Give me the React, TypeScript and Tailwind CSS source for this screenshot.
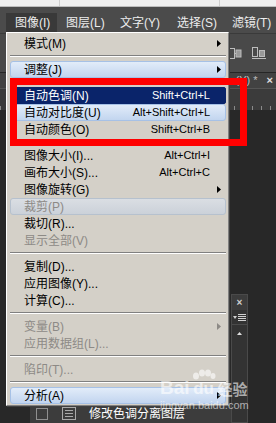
import React from "react";

type Row =
  | { sep: true }
  | {
      sep?: false;
      label: string;
      keys?: string;
      sub?: boolean;
      off?: boolean;
      hl?: "blue" | "navy" | "gray";
    };

const rows: Row[] = [
  { label: "模式(M)", sub: true },
  { sep: true },
  { label: "调整(J)", sub: true, hl: "blue" },
  { sep: true },
  { label: "自动色调(N)", keys: "Shift+Ctrl+L", hl: "navy" },
  { label: "自动对比度(U)", keys: "Alt+Shift+Ctrl+L", hl: "blue" },
  { label: "自动颜色(O)", keys: "Shift+Ctrl+B" },
  { sep: true },
  { label: "图像大小(I)...", keys: "Alt+Ctrl+I" },
  { label: "画布大小(S)...", keys: "Alt+Ctrl+C" },
  { label: "图像旋转(G)", sub: true },
  { label: "裁剪(P)", off: true, hl: "gray" },
  { label: "裁切(R)..." },
  { label: "显示全部(V)", off: true },
  { sep: true },
  { label: "复制(D)..." },
  { label: "应用图像(Y)..." },
  { label: "计算(C)..." },
  { sep: true },
  { label: "变量(B)", sub: true, off: true },
  { label: "应用数据组(L)...", off: true },
  { sep: true },
  { label: "陷印(T)...", off: true },
  { sep: true },
  { label: "分析(A)", sub: true, hl: "blue" },
];

const menubar = [
  { label: "图像(I)", w: "w-[51px] ml-[6px] bg-[#393939]" },
  { label: "图层(L)", w: "w-[54px]" },
  { label: "文字(Y)", w: "w-[57px]" },
  { label: "选择(S)", w: "w-[55px]" },
  { label: "滤镜(T)", w: "w-[60px]" },
];

function Arrow({ off }: { off?: boolean }) {
  return (
    <svg width="4" height="7" viewBox="0 0 4 7">
      <path d="M0 0 L4 3.5 L0 7 Z" fill={off ? "#8d8a86" : "#000"} />
    </svg>
  );
}

function MenuRow({ row }: { row: Exclude<Row, { sep: true }> }) {
  const hl =
    row.hl === "navy"
      ? "bg-[#0a246a] border-[#0a246a] rounded-[2px] text-white"
      : row.hl === "blue"
        ? "bg-gradient-to-b from-[#e2ecf9] to-[#c2d5ef] border-[#a6c1e6] rounded-[3px]"
        : row.hl === "gray"
          ? "bg-gradient-to-b from-[#dadee3] to-[#cbd1d9] border-[#b6c1ce] rounded-[3px]"
          : "border-transparent";
  const color = row.hl === "navy" ? "text-white" : row.off ? "text-[#8d8a86]" : "text-black";
  return (
    <div className={`ml-[3px] mr-[2px] h-[17px] border flex items-center pl-[13px] pr-[4px] ${hl} ${color}`}>
      <span className="flex-1 text-[12px] leading-none whitespace-nowrap">{row.label}</span>
      {row.keys && <span className="text-[11px] leading-none whitespace-nowrap">{row.keys}</span>}
      <span className="w-[11px] flex justify-end">{row.sub && <Arrow off={row.off} />}</span>
    </div>
  );
}

export default function App() {
  const ticks = Array.from({ length: 31 });
  return (
    <div
      className="relative w-[276px] h-[423px] overflow-hidden bg-[#282828] flex flex-col"
      style={{ fontFamily: '"Liberation Sans", "Noto Sans CJK SC", sans-serif' }}
    >
      {/* window above */}
      <div className="h-[7px] bg-[#efefef] flex border-b border-[#bdbdbd]">
        <div className="w-[60px] border-r border-[#cfcfcf]" />
        <div className="w-[160px] border-r border-[#cfcfcf]" />
      </div>

      {/* menubar */}
      <div className="h-[26px] bg-[#4b4b4b] flex items-end">
        {menubar.map((m) => (
          <div key={m.label} className={`h-[20px] pl-[9px] flex items-center shrink-0 ${m.w}`}>
            <span className="text-[12px] leading-none text-[#ededed] whitespace-nowrap">{m.label}</span>
          </div>
        ))}
      </div>

      {/* options bar */}
      <div className="h-[39px] bg-[#494949] border-t border-[#3a3a3a] flex items-center justify-end pr-[10px] gap-[10px]">
        <svg width="13" height="11" viewBox="0 0 13 11">
          <rect x="0.5" y="0.5" width="5" height="10" fill="none" stroke="#bdbdbd" />
          <line x1="5" y1="5.5" x2="7" y2="5.5" stroke="#bdbdbd" />
          <rect x="7" y="2" width="5" height="7" fill="#9a9a9a" stroke="#bdbdbd" />
        </svg>
        <svg width="14" height="12" viewBox="0 0 14 12">
          <rect x="0.5" y="0.5" width="5" height="9" fill="none" stroke="#bdbdbd" />
          <rect x="7.5" y="3.5" width="5" height="6" fill="#9a9a9a" stroke="#bdbdbd" />
          <line x1="0" y1="11.5" x2="14" y2="11.5" stroke="#bdbdbd" />
        </svg>
      </div>

      {/* document tab */}
      <div className="h-px bg-[#262626]" />
      <div className="h-[15px] bg-[#424242] flex items-center justify-end pr-[3px] gap-[9px]">
        <span className="text-[11px] leading-none text-[#bdbdbd]">(Y) *</span>
        <span className="text-[11px] leading-none font-bold text-[#e0e0e0]">×</span>
      </div>

      {/* ruler */}
      <div className="h-[22px] bg-[#3b3b3b] border-t border-[#555] flex items-end">
        {ticks.map((_, i) => (
          <div key={i} className="w-[9px] h-[4px] border-l border-[#8a8a8a] shrink-0" />
        ))}
      </div>

      {/* workspace */}
      <div className="flex-1 flex">
        <div className="w-[30px]" />
        <div className="w-[201px] flex flex-col justify-end">
          <div className="h-[20px] bg-[#3c3c3c] border-t border-[#4a4a4a] flex items-center pl-[6px]">
            <div className="w-[12px] h-[12px] border border-[#8f8f8f]" />
            <svg className="ml-[14px]" width="14" height="13" viewBox="0 0 14 13">
              <rect x="0.5" y="0.5" width="13" height="12" fill="none" stroke="#a8a8a8" />
              <line x1="3" y1="3.5" x2="11" y2="3.5" stroke="#a8a8a8" />
              <line x1="3" y1="6.5" x2="11" y2="6.5" stroke="#a8a8a8" />
              <line x1="3" y1="9.5" x2="11" y2="9.5" stroke="#a8a8a8" />
            </svg>
            <span className="ml-[13px] text-[12px] leading-none text-white whitespace-nowrap">修改色调分离图层</span>
          </div>
        </div>
        <div className="w-[17px] flex flex-col justify-end">
          <div className="h-[129px] bg-[#333] border border-[#4a4a4a] flex flex-col">
            <div className="h-[15px] bg-[#3c3c3c] flex items-center justify-center">
              <span className="text-[10px] leading-none font-bold text-[#d0d0d0]">×</span>
            </div>
            <div className="h-[15px] flex items-center justify-center gap-[1px] border-b border-[#4a4a4a]">
              <svg width="13" height="9" viewBox="0 0 13 9">
                <path d="M0 3 L4 3 L2 6 Z" fill="#d0d0d0" />
                <line x1="5" y1="1.5" x2="13" y2="1.5" stroke="#d0d0d0" />
                <line x1="5" y1="3.5" x2="13" y2="3.5" stroke="#d0d0d0" />
                <line x1="5" y1="5.5" x2="13" y2="5.5" stroke="#d0d0d0" />
                <line x1="5" y1="7.5" x2="13" y2="7.5" stroke="#d0d0d0" />
              </svg>
            </div>
            <div className="flex justify-center pt-[7px]">
              <svg width="5" height="3" viewBox="0 0 5 3">
                <path d="M0 3 L2.5 0 L5 3 Z" fill="#e0e0e0" />
              </svg>
            </div>
          </div>
        </div>
        <div className="flex-1" />
      </div>

      {/* dropdown menu */}
      <div className="absolute left-[6px] top-[32px] w-[223px] bg-[#d4d0c8] border border-t-white border-l-white border-r-[#808080] border-b-[#808080] shadow-[1px_1px_0_#404040] pt-[2px] pb-[1px]">
        {rows.map((r, i) =>
          r.sep ? (
            <div key={i} className="h-[9px] ml-[3px] mr-[2px] pt-[3px]">
              <div className="h-px bg-[#808080]" />
              <div className="h-px bg-white" />
            </div>
          ) : (
            <MenuRow key={i} row={r} />
          ),
        )}
      </div>

      {/* annotation */}
      <div className="absolute left-[10px] top-[78px] w-[237px] h-[68px] border-[7px] border-[#ff0000]" />

      {/* watermark */}
      <div className="absolute left-[160px] top-[369px] flex flex-col items-start text-white/60 pointer-events-none">
        <div className="flex items-end">
          <span className="text-[19px] leading-none font-bold">Bai</span>
          <div className="relative ml-[2px] flex flex-col items-center">
            <svg width="24" height="11" viewBox="0 0 24 11">
              <ellipse cx="4" cy="7" rx="3" ry="3.5" fill="currentColor" />
              <ellipse cx="10" cy="4" rx="3" ry="3.5" fill="currentColor" />
              <ellipse cx="16" cy="4" rx="3" ry="3.5" fill="currentColor" />
              <ellipse cx="21" cy="7" rx="2.5" ry="3" fill="currentColor" />
            </svg>
            <span className="text-[17px] leading-none font-bold">du</span>
          </div>
          <span className="ml-[2px] text-[15px] leading-none font-bold">经验</span>
        </div>
        <span className="mt-[3px] text-[11px] leading-none">jingyan.baidu.com</span>
      </div>
    </div>
  );
}
